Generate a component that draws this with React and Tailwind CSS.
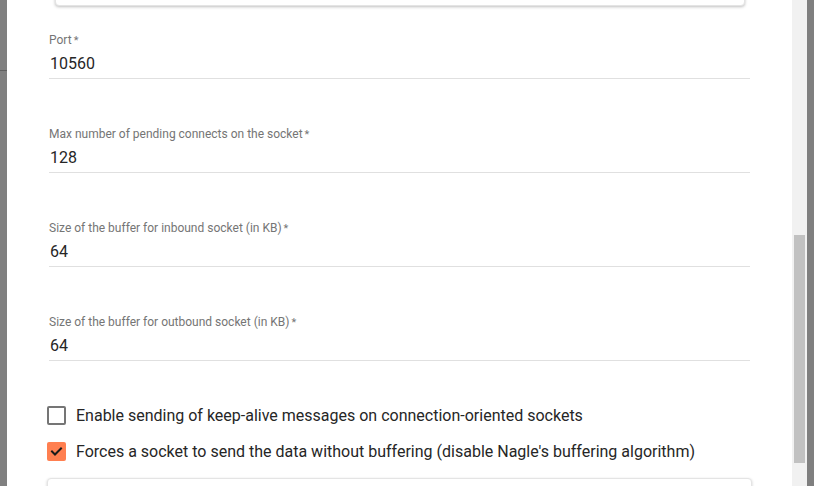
import React from 'react';

const fields = [
  { label: 'Port', value: '10560' },
  { label: 'Max number of pending connects on the socket', value: '128' },
  { label: 'Size of the buffer for inbound socket (in KB)', value: '64' },
  { label: 'Size of the buffer for outbound socket (in KB)', value: '64' },
];

const Field = ({ label, value, first }) => (
  <div className={first ? 'mt-[27px]' : 'mt-[48px]'}>
    <div className="h-[14px] text-[12px] leading-[14px] text-[#757575]">
      {label}
      <span className="ml-[2px] text-[11px] leading-none">*</span>
    </div>
    <div className="mt-[7px] pb-[5px] pl-[1px] text-[16px] leading-[19px] text-[#262626] border-b border-[#e0e0e0]">
      {value}
    </div>
  </div>
);

const CheckRow = ({ checked, children }) => (
  <div className="h-[36px] -ml-[2px] flex items-center gap-[10px]">
    {checked ? (
      <div className="w-[19px] h-[19px] rounded-[2px] bg-[#ff7f50] flex items-center justify-center">
        <svg width="19" height="19" viewBox="0 0 19 19" fill="none" stroke="#1a1a1a" strokeWidth="2" strokeLinecap="square">
          <path d="M5 9.5l3 3 6-6" />
        </svg>
      </div>
    ) : (
      <div className="w-[19px] h-[19px] rounded-[2px] border-2 border-[#757575]" />
    )}
    <span className="text-[16px] leading-[19px] text-[#262626]">{children}</span>
  </div>
);

export default function App() {
  return (
    <div className="w-[814px] h-[486px] overflow-hidden flex" style={{ fontFamily: 'Roboto, "Liberation Sans", sans-serif' }}>
      {/* backdrop strip */}
      <div className="w-[7px] bg-[#808080] flex flex-col">
        <div className="h-[70px]" />
        <div className="h-[1px] bg-[#606060]" />
      </div>

      {/* dialog body */}
      <div className="w-[785px] bg-white px-[42px]">
        <div className="-mt-[30px] h-[36px] ml-[6px] mr-[5px] rounded-[4px] border border-[#e4e4e4] shadow-[0_1px_3px_rgba(0,0,0,0.25)] bg-white" />

        {fields.map((f, i) => (
          <Field key={i} label={f.label} value={f.value} first={i === 0} />
        ))}

        <div className="mt-[36px]">
          <CheckRow>Enable sending of keep-alive messages on connection-oriented sockets</CheckRow>
          <CheckRow checked>Forces a socket to send the data without buffering (disable Nagle's buffering algorithm)</CheckRow>
        </div>

        <div className="mt-[9px] -mx-[2px] h-[40px] rounded-[4px] border border-[#e4e4e4] shadow-[0_1px_3px_rgba(0,0,0,0.2)] bg-white" />
      </div>

      {/* scrollbar */}
      <div className="w-[15px] bg-[#f1f1f1] pt-[235px] pl-[2px]">
        <div className="w-[11px] h-[228px] bg-[#c1c1c1]" />
      </div>

      <div className="w-[7px] bg-[#7f7f7f]" />
    </div>
  );
}
